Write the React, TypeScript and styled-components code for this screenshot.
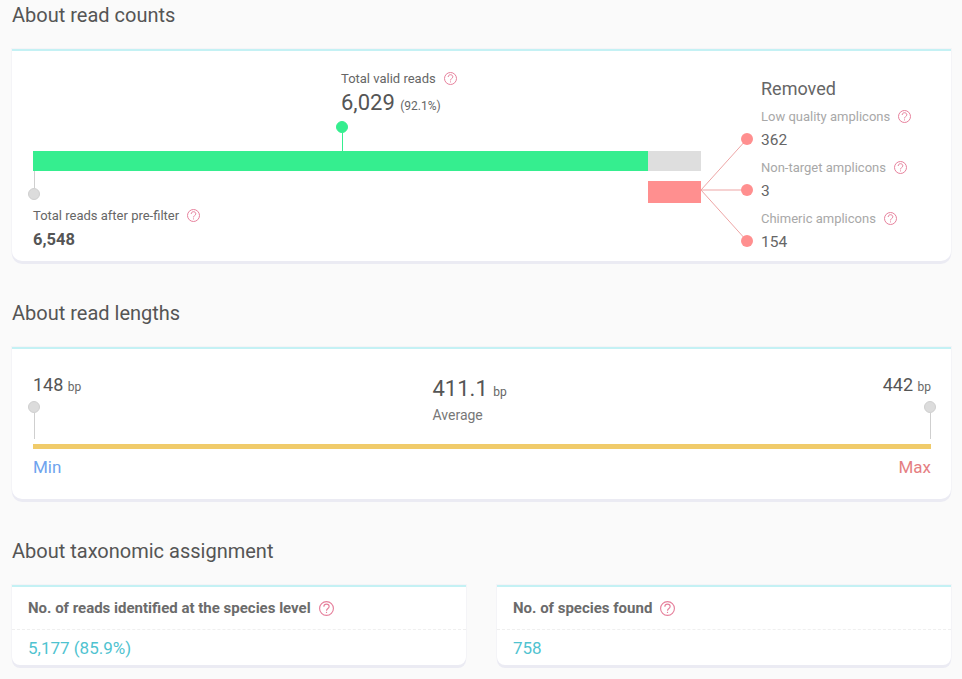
import React from 'react';
import styled, { createGlobalStyle } from 'styled-components';

const GlobalStyle = createGlobalStyle`
  html, body {
    margin: 0;
    background: #fafafa;
    font-family: Roboto, "Liberation Sans", sans-serif;
    color: #555;
  }
`;

const Page = styled.div`
  padding: 0 11px 14px 12px;
`;

const Heading = styled.h2`
  margin: 0;
  height: 30px;
  line-height: 30px;
  font-size: 20px;
  font-weight: 400;
  color: #555;
`;

const Card = styled.section`
  box-sizing: border-box;
  background: #fff;
  border-top: 2px solid #c4f1f4;
  border-radius: 0 0 10px 10px;
  box-shadow: 0 3px 0 #ebebf3, 0 0 0 1px #f4f4f7;
`;

const ReadsCard = styled(Card)`
  margin-top: 19px;
  height: 212px;
  padding: 0 0 0 21px;
  display: flex;
`;

const Chart = styled.div`
  width: 668px;
  flex: none;
`;

const ValidBlock = styled.div`
  height: 100px;
  box-sizing: border-box;
  padding: 19px 0 0 308px;
`;

const Label = styled.div<{ $muted?: boolean }>`
  display: flex;
  align-items: center;
  gap: 8px;
  height: 16px;
  font-size: 13px;
  color: ${(p) => (p.$muted ? '#a8a8a8' : '#666')};
`;

const BigValue = styled.div`
  margin-top: 4px;
  font-size: 22px;
  line-height: 26px;
  color: #555;
`;

const Small = styled.span`
  font-size: 12px;
  color: #666;
`;

const Pin = styled.div<{ $color: string; $stem: number; $up?: boolean }>`
  display: flex;
  flex-direction: ${(p) => (p.$up ? 'column-reverse' : 'column')};
  align-items: center;
  width: 12px;
  &::before {
    content: '';
    width: 12px;
    height: 12px;
    border-radius: 50%;
    box-sizing: border-box;
    background: ${(p) => p.$color};
    border: 1px solid ${(p) => (p.$color === '#dcdcdc' ? '#cfcfcf' : p.$color)};
  }
  &::after {
    content: '';
    width: 1px;
    height: ${(p) => p.$stem}px;
    background: ${(p) => (p.$color === '#dcdcdc' ? '#cfcfcf' : p.$color)};
  }
`;

const ValidPin = styled(Pin)`
  margin: 2px 0 0 -5px;
`;

const Bar = styled.div`
  display: flex;
  height: 20px;
`;

const BarPart = styled.div<{ $color: string; $grow: number }>`
  flex: ${(p) => p.$grow};
  background: ${(p) => p.$color};
`;

const UnderBar = styled.div`
  display: flex;
  justify-content: space-between;
  align-items: flex-start;
`;

const StartPin = styled(Pin)`
  margin-left: -5px;
`;

const RemovedBar = styled.div`
  margin-top: 10px;
  width: 53px;
  height: 22px;
  background: #ff8f8f;
`;

const TotalLabel = styled(Label)`
  margin-top: 4px;
`;

const TotalValue = styled.div`
  margin-top: 7px;
  font-size: 16.5px;
  line-height: 20px;
  font-weight: 700;
  color: #555;
`;

const Connector = styled.svg`
  flex: none;
  width: 52px;
  height: 120px;
  margin-top: 80px;
`;

const Removed = styled.div`
  margin-left: 8px;
  padding-top: 26px;
`;

const RemovedTitle = styled.div`
  margin-bottom: 7px;
  font-size: 18px;
  line-height: 24px;
  color: #666;
`;

const RemovedItem = styled.div`
  margin-top: 3px;
  height: 48px;
`;

const RemovedValue = styled.div`
  margin-top: 6px;
  font-size: 15.5px;
  line-height: 20px;
  color: #666;
`;

const LengthHeading = styled(Heading)`
  margin-top: 37px;
`;

const LengthCard = styled(Card)`
  margin-top: 19px;
  height: 152px;
  padding: 26px 20px 0 21px;
`;

const LengthTop = styled.div`
  display: flex;
  justify-content: space-between;
  align-items: flex-start;
  height: 69px;
`;

const EndBlock = styled.div<{ $right?: boolean }>`
  display: flex;
  flex-direction: column;
  align-items: ${(p) => (p.$right ? 'flex-end' : 'flex-start')};
`;

const EndValue = styled.div`
  font-size: 18px;
  line-height: 20px;
  color: #555;
`;

const Unit = styled.span`
  font-size: 12px;
  color: #666;
`;

const EndPin = styled(Pin)<{ $right?: boolean }>`
  margin: 4px ${(p) => (p.$right ? '-5px' : '0')} 0 ${(p) => (p.$right ? '0' : '-5px')};
`;

const Average = styled.div`
  width: 90px;
  margin: -1px 9px 0 0;
`;

const AverageValue = styled.div`
  font-size: 22px;
  line-height: 30px;
  color: #555;
`;

const AverageLabel = styled.div`
  font-size: 14px;
  line-height: 16px;
  color: #777;
`;

const LengthBar = styled.div`
  height: 5px;
  background: #f0cb6a;
`;

const LengthLegend = styled.div`
  display: flex;
  justify-content: space-between;
  margin-top: 8px;
  font-size: 17px;
  line-height: 20px;
`;

const LegendText = styled.span<{ $color: string }>`
  color: ${(p) => p.$color};
`;

const TaxHeading = styled(Heading)`
  margin-top: 37px;
`;

const TaxGrid = styled.div`
  margin-top: 19px;
  display: grid;
  grid-template-columns: 454px 454px;
  justify-content: space-between;
`;

const TaxCard = styled(Card)`
  height: 80px;
  border-radius: 0 0 8px 8px;
`;

const TaxHeader = styled.div`
  display: flex;
  align-items: center;
  gap: 8px;
  box-sizing: border-box;
  height: 43px;
  padding: 0 16px;
  border-bottom: 1px dashed #efefef;
  font-size: 15px;
  font-weight: 700;
  color: #6b6b6b;
`;

const TaxValue = styled.div`
  padding: 8px 16px 0;
  font-size: 17px;
  line-height: 20px;
  color: #4fc3d0;
`;

const Help = ({ size = 13 }: { size?: number }) => (
  <svg width={size} height={size} viewBox="0 0 13 13" fill="none" stroke="#e6809c" strokeWidth="1">
    <circle cx="6.5" cy="6.5" r="6" />
    <path d="M4.2 5c0-1.4 1-2.3 2.3-2.3s2.3.9 2.3 2.1c0 1.6-2.3 1.8-2.3 3.6" />
    <path d="M6.5 9.4v1" />
  </svg>
);

const removedItems = [
  { label: 'Low quality amplicons', value: '362' },
  { label: 'Non-target amplicons', value: '3' },
  { label: 'Chimeric amplicons', value: '154' },
];

export default function App() {
  return (
    <Page>
      <GlobalStyle />
      <Heading>About read counts</Heading>
      <ReadsCard>
        <Chart>
          <ValidBlock>
            <Label>
              Total valid reads <Help />
            </Label>
            <BigValue>
              6,029 <Small>(92.1%)</Small>
            </BigValue>
            <ValidPin $color="#35ee8f" $stem={18} />
          </ValidBlock>
          <Bar>
            <BarPart $color="#35ee8f" $grow={615} />
            <BarPart $color="#dedede" $grow={53} />
          </Bar>
          <UnderBar>
            <StartPin $color="#dcdcdc" $stem={17} $up />
            <RemovedBar />
          </UnderBar>
          <TotalLabel>
            Total reads after pre-filter <Help />
          </TotalLabel>
          <TotalValue>6,548</TotalValue>
        </Chart>
        <Connector viewBox="0 0 52 120">
          <g stroke="#eda5a5" strokeWidth="1">
            <line x1="0" y1="59" x2="46" y2="8" />
            <line x1="0" y1="59" x2="46" y2="59" />
            <line x1="0" y1="59" x2="46" y2="110" />
          </g>
          <g fill="#ff8f8f">
            <circle cx="46" cy="8" r="6" />
            <circle cx="46" cy="59" r="6" />
            <circle cx="46" cy="110" r="6" />
          </g>
        </Connector>
        <Removed>
          <RemovedTitle>Removed</RemovedTitle>
          {removedItems.map((item) => (
            <RemovedItem key={item.label}>
              <Label $muted>
                {item.label} <Help />
              </Label>
              <RemovedValue>{item.value}</RemovedValue>
            </RemovedItem>
          ))}
        </Removed>
      </ReadsCard>

      <LengthHeading>About read lengths</LengthHeading>
      <LengthCard>
        <LengthTop>
          <EndBlock>
            <EndValue>
              148 <Unit>bp</Unit>
            </EndValue>
            <EndPin $color="#dcdcdc" $stem={26} />
          </EndBlock>
          <Average>
            <AverageValue>
              411.1 <Unit>bp</Unit>
            </AverageValue>
            <AverageLabel>Average</AverageLabel>
          </Average>
          <EndBlock $right>
            <EndValue>
              442 <Unit>bp</Unit>
            </EndValue>
            <EndPin $color="#dcdcdc" $stem={26} $right />
          </EndBlock>
        </LengthTop>
        <LengthBar />
        <LengthLegend>
          <LegendText $color="#6ea3ee">Min</LegendText>
          <LegendText $color="#e57f83">Max</LegendText>
        </LengthLegend>
      </LengthCard>

      <TaxHeading>About taxonomic assignment</TaxHeading>
      <TaxGrid>
        <TaxCard>
          <TaxHeader>
            No. of reads identified at the species level <Help size={15} />
          </TaxHeader>
          <TaxValue>5,177 (85.9%)</TaxValue>
        </TaxCard>
        <TaxCard>
          <TaxHeader>
            No. of species found <Help size={15} />
          </TaxHeader>
          <TaxValue>758</TaxValue>
        </TaxCard>
      </TaxGrid>
    </Page>
  );
}
